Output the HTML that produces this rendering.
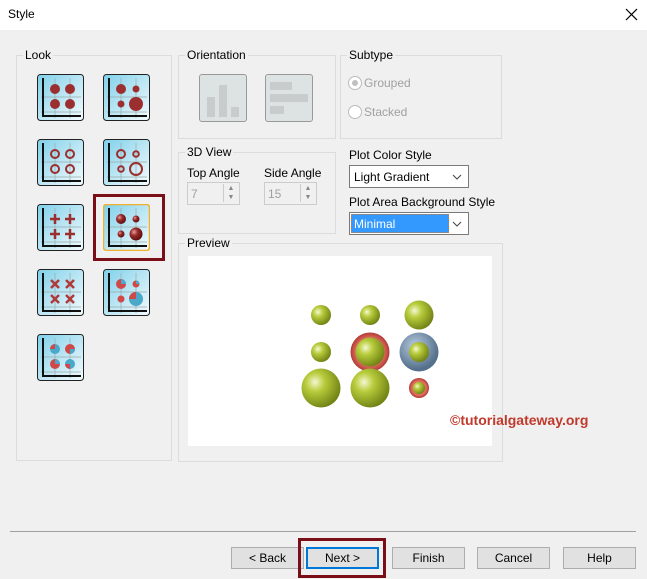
<!DOCTYPE html>
<html><head><style>
body{margin:0;width:647px;height:579px;background:#f0f0f0;font-family:"Liberation Sans",sans-serif;font-size:12px;color:#000;position:relative;overflow:hidden}
.a{position:absolute}
.g{position:absolute;border:1px solid #dcdcdc}
.lb{position:absolute;background:#f0f0f0;padding:0 2px;font-size:12px}
.btn{position:absolute;top:547px;width:71px;height:20px;border:1px solid #adadad;background:#e1e1e1;text-align:center;line-height:20px;font-size:12px}
.ic{position:absolute;width:47px;height:47px}
.dis{color:#a0a0a0}
</style></head><body>
<div class="a" style="left:0;top:0;width:647px;height:30px;background:#fff"></div>
<div class="a" style="left:8px;top:7px;font-size:12px">Style</div>
<svg class="a" style="left:625px;top:8px" width="13" height="13"><path d="M1 1L12 12M12 1L1 12" stroke="#000" stroke-width="1.2"/></svg>

<div class="g" style="left:16px;top:55px;width:154px;height:404px"></div><div class="lb" style="left:23px;top:48px">Look</div>
<div class="g" style="left:178px;top:55px;width:156px;height:82px"></div><div class="lb" style="left:185px;top:48px">Orientation</div>
<div class="g" style="left:340px;top:55px;width:160px;height:82px"></div><div class="lb" style="left:347px;top:48px">Subtype</div>
<div class="g" style="left:178px;top:152px;width:156px;height:80px"></div><div class="lb" style="left:185px;top:145px">3D View</div>
<div class="g" style="left:178px;top:243px;width:323px;height:217px"></div><div class="lb" style="left:185px;top:236px">Preview</div>

<svg width="0" height="0" style="position:absolute"><defs>
<linearGradient id="bg" x1="0" y1="0" x2="1" y2="1"><stop offset="0" stop-color="#7fd0ea"/><stop offset="1" stop-color="#f4fbfd"/></linearGradient>
<radialGradient id="sp" cx="0.35" cy="0.35" r="0.7"><stop offset="0" stop-color="#e6a0a0"/><stop offset="0.4" stop-color="#9b2a2a"/><stop offset="1" stop-color="#5a0e0e"/></radialGradient>
<radialGradient id="gr" cx="0.35" cy="0.35" r="0.7"><stop offset="0" stop-color="#f3f8d0"/><stop offset="0.35" stop-color="#b8cc3c"/><stop offset="1" stop-color="#6e8012"/></radialGradient>
<radialGradient id="rr" cx="0.5" cy="0.5" r="0.5"><stop offset="0.7" stop-color="#e07060"/><stop offset="1" stop-color="#b03a35"/></radialGradient>
<radialGradient id="br" cx="0.4" cy="0.35" r="0.6"><stop offset="0" stop-color="#b8cce0"/><stop offset="1" stop-color="#55708c"/></radialGradient>
<g id="base"><rect x="0.5" y="0.5" width="46" height="46" rx="3" fill="url(#bg)" stroke="#222"/><path d="M4 23H44M4 38H44M18 4V44M33 4V44" stroke="#9aa" stroke-width="0.7"/><path d="M6 4V42H44" stroke="#111" stroke-width="2" fill="none"/></g>
</defs></svg>

<svg class="ic" style="left:37px;top:74px" viewBox="0 0 47 47"><use href="#base"/><g fill="#9b2f2f"><circle cx="18" cy="15" r="5"/><circle cx="33" cy="15" r="5"/><circle cx="18" cy="30" r="5"/><circle cx="33" cy="30" r="5"/></g></svg>
<svg class="ic" style="left:103px;top:74px" viewBox="0 0 47 47"><use href="#base"/><g fill="#9b2f2f"><circle cx="18" cy="15" r="5"/><circle cx="33" cy="15" r="3.5"/><circle cx="18" cy="30" r="3.5"/><circle cx="33" cy="30" r="7"/></g></svg>
<svg class="ic" style="left:37px;top:139px" viewBox="0 0 47 47"><use href="#base"/><g fill="none" stroke="#9b2f2f" stroke-width="2"><circle cx="18" cy="15" r="4"/><circle cx="33" cy="15" r="4"/><circle cx="18" cy="30" r="4"/><circle cx="33" cy="30" r="4"/></g></svg>
<svg class="ic" style="left:103px;top:139px" viewBox="0 0 47 47"><use href="#base"/><g fill="none" stroke="#9b2f2f" stroke-width="2"><circle cx="18" cy="15" r="4"/><circle cx="33" cy="15" r="2.8"/><circle cx="18" cy="30" r="2.8"/><circle cx="33" cy="30" r="6"/></g></svg>
<svg class="ic" style="left:37px;top:204px" viewBox="0 0 47 47"><use href="#base"/><g stroke="#9b2f2f" stroke-width="2.5"><path d="M13 15H23M18 10V20M28 15H38M33 10V20M13 30H23M18 25V35M28 30H38M33 25V35"/></g></svg>
<svg class="ic" style="left:103px;top:204px" viewBox="0 0 47 47"><rect x="0.5" y="0.5" width="46" height="46" rx="3" fill="url(#bg)" stroke="#f0b030" stroke-width="1.5"/><path d="M4 23H44M4 38H44M18 4V44M33 4V44" stroke="#9aa" stroke-width="0.7"/><path d="M6 4V42H44" stroke="#111" stroke-width="2" fill="none"/><circle cx="18" cy="15" r="5" fill="url(#sp)"/><circle cx="33" cy="15" r="3.5" fill="url(#sp)"/><circle cx="18" cy="30" r="3.5" fill="url(#sp)"/><circle cx="33" cy="30" r="6.5" fill="url(#sp)"/></svg>
<svg class="ic" style="left:37px;top:269px" viewBox="0 0 47 47"><use href="#base"/><g stroke="#b03a3a" stroke-width="2.5"><path d="M14 11L22 19M22 11L14 19M29 11L37 19M37 11L29 19M14 26L22 34M22 26L14 34M29 26L37 34M37 26L29 34"/></g></svg>
<svg class="ic" style="left:103px;top:269px" viewBox="0 0 47 47"><use href="#base"/><circle cx="18" cy="15" r="5" fill="#d04848"/><path d="M18 15V10A5 5 0 0 1 23 15Z" fill="#4aa8c8"/><circle cx="33" cy="15" r="3.5" fill="#d04848"/><path d="M33 15V11.5A3.5 3.5 0 0 1 36.5 15Z" fill="#4aa8c8"/><circle cx="18" cy="30" r="3.5" fill="#d04848"/><circle cx="33" cy="30" r="7" fill="#4aa8c8"/><path d="M33 30V23A7 7 0 0 0 26 30Z" fill="#d04848"/></svg>
<svg class="ic" style="left:37px;top:334px" viewBox="0 0 47 47"><use href="#base"/><circle cx="18" cy="15" r="5" fill="#4aa8c8"/><path d="M18 15V10A5 5 0 0 0 13 15Z" fill="#d04848"/><circle cx="33" cy="15" r="5" fill="#d04848"/><path d="M33 15H38A5 5 0 0 1 33 20Z" fill="#4aa8c8"/><circle cx="18" cy="30" r="5" fill="#d04848"/><path d="M18 30V25A5 5 0 0 1 23 30Z" fill="#4aa8c8"/><circle cx="33" cy="30" r="5" fill="#4aa8c8"/><path d="M33 30H28A5 5 0 0 0 33 35Z" fill="#d04848"/></svg>
<div class="a" style="left:93px;top:194px;width:66px;height:61px;border:3px solid #7a0f1a"></div>

<div class="a" style="left:199px;top:74px;width:46px;height:46px;border:1px solid #999;border-radius:3px;background:#dde3e3"><div class="a" style="left:7px;top:22px;width:8px;height:20px;background:#c8cccc"></div><div class="a" style="left:19px;top:10px;width:8px;height:32px;background:#c8cccc"></div><div class="a" style="left:31px;top:32px;width:8px;height:10px;background:#c8cccc"></div></div>
<div class="a" style="left:265px;top:74px;width:46px;height:46px;border:1px solid #999;border-radius:3px;background:#dde3e3"><div class="a" style="left:4px;top:7px;width:22px;height:8px;background:#c8cccc"></div><div class="a" style="left:4px;top:19px;width:38px;height:8px;background:#c8cccc"></div><div class="a" style="left:4px;top:31px;width:14px;height:8px;background:#c8cccc"></div></div>

<div class="a" style="left:348px;top:76px;width:12px;height:12px;border:1px solid #bbb;border-radius:50%;background:#fff"><div class="a" style="left:3px;top:3px;width:6px;height:6px;border-radius:50%;background:#c0c0c0"></div></div>
<div class="a dis" style="left:364px;top:76px">Grouped</div>
<div class="a" style="left:348px;top:105px;width:12px;height:12px;border:1px solid #bbb;border-radius:50%;background:#fff"></div>
<div class="a dis" style="left:364px;top:105px">Stacked</div>

<div class="a" style="left:187px;top:166px">Top Angle</div>
<div class="a" style="left:264px;top:166px">Side Angle</div>
<div class="a" style="left:187px;top:182px;width:51px;height:21px;border:1px solid #ccc;background:#f0f0f0"><span class="a dis" style="left:3px;top:4px">7</span><div class="a" style="left:35px;top:1px;width:14px;height:18px;border-left:1px solid #ccc;font-size:7px;color:#888;text-align:center;line-height:9px">▲<br>▼</div></div>
<div class="a" style="left:264px;top:182px;width:51px;height:21px;border:1px solid #ccc;background:#f0f0f0"><span class="a dis" style="left:3px;top:4px">15</span><div class="a" style="left:35px;top:1px;width:14px;height:18px;border-left:1px solid #ccc;font-size:7px;color:#888;text-align:center;line-height:9px">▲<br>▼</div></div>

<div class="a" style="left:349px;top:148px">Plot Color Style</div>
<div class="a" style="left:349px;top:165px;width:118px;height:21px;border:1px solid #7a7a7a;background:#fff"><span class="a" style="left:4px;top:4px">Light Gradient</span><svg class="a" style="left:102px;top:8px" width="10" height="6"><path d="M1 1L5 5L9 1" stroke="#444" fill="none"/></svg></div>
<div class="a" style="left:349px;top:195px">Plot Area Background Style</div>
<div class="a" style="left:349px;top:212px;width:118px;height:21px;border:1px solid #7a7a7a;background:#fff"><div class="a" style="left:1px;top:1px;width:98px;height:19px;background:#3399ff;border:1px dotted #d47a30;box-sizing:border-box"></div><span class="a" style="left:4px;top:4px;color:#fff">Minimal</span><svg class="a" style="left:102px;top:8px" width="10" height="6"><path d="M1 1L5 5L9 1" stroke="#444" fill="none"/></svg></div>

<svg class="a" style="left:188px;top:256px" width="304" height="190"><rect width="304" height="190" fill="#fff"/>
<g transform="translate(-188,-256)">
<circle cx="321" cy="315" r="10" fill="url(#gr)"/><circle cx="370" cy="315" r="10" fill="url(#gr)"/><circle cx="419" cy="315" r="14.5" fill="url(#gr)"/>
<circle cx="321" cy="352" r="10" fill="url(#gr)"/>
<circle cx="370" cy="352" r="19.5" fill="url(#rr)"/><circle cx="370" cy="352" r="14.5" fill="url(#gr)"/>
<circle cx="419" cy="352" r="19.5" fill="url(#br)"/><circle cx="419" cy="352" r="10" fill="url(#gr)"/>
<circle cx="321" cy="388" r="19.5" fill="url(#gr)"/><circle cx="370" cy="388" r="19.5" fill="url(#gr)"/>
<circle cx="419" cy="388" r="10" fill="url(#rr)"/><circle cx="419" cy="388" r="6" fill="url(#gr)"/>
</g></svg>
<div class="a" style="left:450px;top:412px;font-weight:bold;font-size:14px;color:#c0392b;white-space:nowrap">©tutorialgateway.org</div>

<div class="a" style="left:10px;top:531px;width:626px;height:1px;background:#a0a0a0"></div>
<div class="btn" style="left:231px">&lt; Back</div>
<div class="btn" style="left:306px;border-color:#0078d7;border-width:2px;width:69px;height:18px;line-height:18px">Next &gt;</div>
<div class="btn" style="left:392px">Finish</div>
<div class="btn" style="left:477px">Cancel</div>
<div class="btn" style="left:563px">Help</div>
<div class="a" style="left:298px;top:538px;width:82px;height:34px;border:3px solid #7a0f1a"></div>
</body></html>
